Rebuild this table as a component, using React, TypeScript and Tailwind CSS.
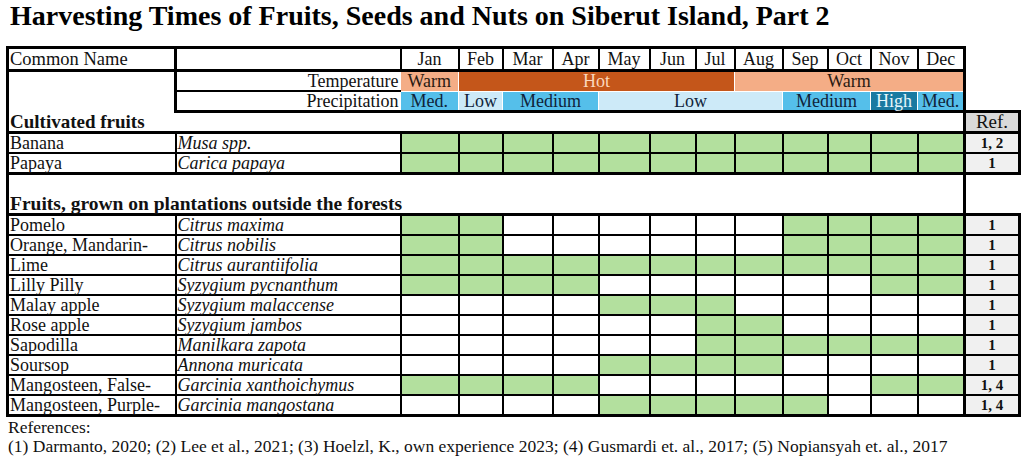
import React from 'react';

type Row = { name: string; sci: string; months: number[]; ref: string };

const months = ['Jan', 'Feb', 'Mar', 'Apr', 'May', 'Jun', 'Jul', 'Aug', 'Sep', 'Oct', 'Nov', 'Dec'];
const colWidths = [168, 225, 58, 44, 50, 46, 51, 46, 39, 48, 45, 43, 47, 47, 55];

const all = [1, 1, 1, 1, 1, 1, 1, 1, 1, 1, 1, 1];

const cultivated: Row[] = [
  { name: 'Banana', sci: 'Musa spp.', months: all, ref: '1, 2' },
  { name: 'Papaya', sci: 'Carica papaya', months: all, ref: '1' },
];

const plantations: Row[] = [
  { name: 'Pomelo', sci: 'Citrus maxima', months: [1, 1, 0, 0, 0, 0, 0, 0, 1, 1, 1, 1], ref: '1' },
  { name: 'Orange, Mandarin-', sci: 'Citrus nobilis', months: [1, 1, 0, 0, 0, 0, 0, 0, 1, 1, 1, 1], ref: '1' },
  { name: 'Lime', sci: 'Citrus aurantiifolia', months: all, ref: '1' },
  { name: 'Lilly Pilly', sci: 'Syzygium pycnanthum', months: [1, 1, 1, 1, 0, 0, 0, 0, 0, 0, 1, 1], ref: '1' },
  { name: 'Malay apple', sci: 'Syzygium malaccense', months: [0, 0, 0, 0, 1, 1, 1, 0, 0, 0, 0, 0], ref: '1' },
  { name: 'Rose apple', sci: 'Syzygium jambos', months: [0, 0, 0, 0, 0, 0, 1, 1, 0, 0, 0, 0], ref: '1' },
  { name: 'Sapodilla', sci: 'Manilkara zapota', months: [0, 0, 0, 0, 0, 0, 1, 1, 1, 1, 1, 1], ref: '1' },
  { name: 'Soursop', sci: 'Annona muricata', months: [0, 0, 0, 0, 1, 1, 1, 1, 0, 0, 0, 0], ref: '1' },
  { name: 'Mangosteen, False-', sci: 'Garcinia xanthoichymus', months: [1, 1, 1, 1, 0, 0, 0, 0, 0, 0, 1, 1], ref: '1, 4' },
  { name: 'Mangosteen, Purple-', sci: 'Garcinia mangostana', months: [0, 0, 0, 0, 1, 1, 1, 1, 1, 0, 0, 0], ref: '1, 4' },
];

function DataRow({ row, last, first }: { row: Row; last: boolean; first: boolean }) {
  const bottom = last ? 'border-b-[3px]' : 'border-b-2';
  const top = first ? 'border-t-[3px]' : 'border-t-2';
  return (
    <tr className="h-[20px]">
      <td className={`border-l-[3px] border-r-2 ${top} ${bottom} border-black px-[1px] leading-[18px] whitespace-nowrap`}>
        {row.name}
      </td>
      <td className={`border-x-2 ${top} ${bottom} border-black px-[1px] italic leading-[18px] whitespace-nowrap`}>
        {row.sci}
      </td>
      {row.months.map((m, i) => (
        <td
          key={i}
          className={`${top} ${bottom} border-l-2 border-black ${i === 11 ? 'border-r-[3px]' : 'border-r-2'} ${
            m ? 'bg-[#b3e09e]' : 'bg-white'
          }`}
        />
      ))}
      <td
        className={`border-x-[3px] ${top} ${bottom} border-black bg-[#f0f0f0] text-center text-[15px] font-bold leading-[16px]`}
      >
        {row.ref}
      </td>
    </tr>
  );
}

export default function App() {
  return (
    <div className="h-[457px] w-[1024px] overflow-hidden bg-white font-['Liberation_Serif',serif] text-[18px] text-[#111]">
      <div className="h-[46px] pl-[10px] pt-[1px] text-[28px] font-bold leading-[30px] text-black">
        Harvesting Times of Fruits, Seeds and Nuts on Siberut Island, Part 2
      </div>

      <div className="pl-[6px]">
        <table className="w-[1012px] table-fixed border-collapse">
          <colgroup>
            {colWidths.map((w, i) => (
              <col key={i} style={{ width: w }} />
            ))}
          </colgroup>
          <tbody>
            <tr className="h-[23px]">
              <td className="border-[3px] border-black px-[1px] text-[18.5px] leading-[18px]">Common Name</td>
              <td className="border-y-[3px] border-l-[3px] border-r-2 border-black" />
              {months.map((m, i) => (
                <td
                  key={m}
                  className={`border-y-[3px] border-l-2 border-black text-center leading-[18px] ${
                    i === 11 ? 'border-r-[3px]' : 'border-r-2'
                  }`}
                >
                  {m}
                </td>
              ))}
              <td />
            </tr>

            <tr className="h-[20px]">
              <td rowSpan={2} className="border-x-[3px] border-t-[3px] border-b-0 border-black" />
              <td className="border-l-[3px] border-b-2 border-black pr-[2px] text-right leading-[18px]">Temperature</td>
              <td className="border-b border-r border-white bg-[#f4ad86] text-center leading-[18px] text-[#2a1a12]">Warm</td>
              <td colSpan={6} className="border-b border-r border-white bg-[#c4561a] text-center leading-[18px] text-[#fbd6bd]">
                Hot
              </td>
              <td colSpan={5} className="border-b border-r-[3px] border-b-white border-r-black bg-[#f4ad86] text-center leading-[18px] text-[#2a1a12]">
                Warm
              </td>
              <td />
            </tr>

            <tr className="h-[20px]">
              <td className="border-l-[3px] border-b-[3px] border-black pr-[2px] text-right leading-[18px]">Precipitation</td>
              <td className="border-r border-b-[3px] border-r-white border-b-black bg-[#55bfea] text-center leading-[18px] text-[#10243a]">Med.</td>
              <td className="border-r border-b-[3px] border-r-white border-b-black bg-[#cdeaf8] text-center leading-[18px] text-[#10243a]">Low</td>
              <td colSpan={2} className="border-r border-b-[3px] border-r-white border-b-black bg-[#55bfea] text-center leading-[18px] text-[#10243a]">
                Medium
              </td>
              <td colSpan={4} className="border-r border-b-[3px] border-r-white border-b-black bg-[#cdeaf8] text-center leading-[18px] text-[#10243a]">
                Low
              </td>
              <td colSpan={2} className="border-r border-b-[3px] border-r-white border-b-black bg-[#55bfea] text-center leading-[18px] text-[#10243a]">
                Medium
              </td>
              <td className="border-r border-b-[3px] border-r-white border-b-black bg-[#1a7aa1] text-center leading-[18px] text-[#e6f6fc]">High</td>
              <td className="border-r-[3px] border-b-[3px] border-black bg-[#55bfea] text-center leading-[18px] text-[#10243a]">Med.</td>
              <td />
            </tr>

            <tr className="h-[20px]">
              <td colSpan={14} className="border-x-[3px] border-b-[3px] border-black px-[1px] text-[19px] font-bold leading-[18px]">
                Cultivated fruits
              </td>
              <td className="border-[3px] border-black bg-[#d9d9d9] text-center text-[19px] leading-[18px]">Ref.</td>
            </tr>

            {cultivated.map((row, i) => (
              <DataRow key={row.name} row={row} first={i === 0} last={i === cultivated.length - 1} />
            ))}

            <tr className="h-[20px]">
              <td colSpan={14} className="border-x-[3px] border-black" />
              <td />
            </tr>
            <tr className="h-[21px]">
              <td colSpan={14} className="border-x-[3px] border-b-[3px] border-black px-[1px] align-bottom text-[19.5px] font-bold leading-[18px]">
                Fruits, grown on plantations outside the forests
              </td>
              <td />
            </tr>

            {plantations.map((row, i) => (
              <DataRow key={row.name} row={row} first={i === 0} last={i === plantations.length - 1} />
            ))}
          </tbody>
        </table>
      </div>

      <div className="pl-[8px] pt-[1px] text-[17.5px] leading-[19px]">
        <p>References:</p>
        <p>
          (1) Darmanto, 2020; (2) Lee et al., 2021; (3) Hoelzl, K., own experience 2023; (4) Gusmardi et. al., 2017; (5)
          Nopiansyah et. al., 2017
        </p>
      </div>
    </div>
  );
}
